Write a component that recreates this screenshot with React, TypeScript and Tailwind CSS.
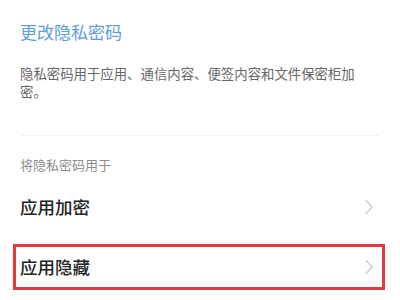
function Chevron() {
  return (
    <svg width="8" height="16" viewBox="0 0 8 16" fill="none" className="shrink-0">
      <path d="M1 1.5L7 8L1 14.5" stroke="#c9c9c9" strokeWidth="1.3" strokeLinecap="round" strokeLinejoin="round" />
    </svg>
  );
}

export default function App() {
  return (
    <div
      className="w-[400px] h-[300px] overflow-hidden bg-white"
      style={{ fontFamily: '"Noto Sans CJK SC", "Noto Sans", sans-serif' }}
    >
      <div className="px-[20px] pt-[22px]">
        <p className="text-[17px] leading-[20px] text-[#5b9ddf]">更改隐私密码</p>
        <p className="mt-[22px] text-[13.4px] leading-[18px] text-[#666666] pr-[24px]">
          隐私密码用于应用、通信内容、便签内容和文件保密柜加密。
        </p>
      </div>

      <div className="mx-[20px] mt-[35px] h-px bg-[#f3f3f3]" />

      <p className="mt-[20px] px-[20px] text-[13px] leading-[18px] text-[#8c8c8c]">将隐私密码用于</p>

      <div className="mt-[9px] flex h-[48px] items-center justify-between pl-[20px] pr-[27px]">
        <span className="text-[17.5px] font-medium text-[#222222]">应用加密</span>
        <Chevron />
      </div>

      <div className="ml-[13px] mr-[15px] mt-[13px] flex h-[46px] items-center justify-between border-[3px] border-[#e23b3f] pl-[4px] pr-[9px]">
        <span className="text-[17.5px] font-medium text-[#222222]">应用隐藏</span>
        <Chevron />
      </div>
    </div>
  );
}
